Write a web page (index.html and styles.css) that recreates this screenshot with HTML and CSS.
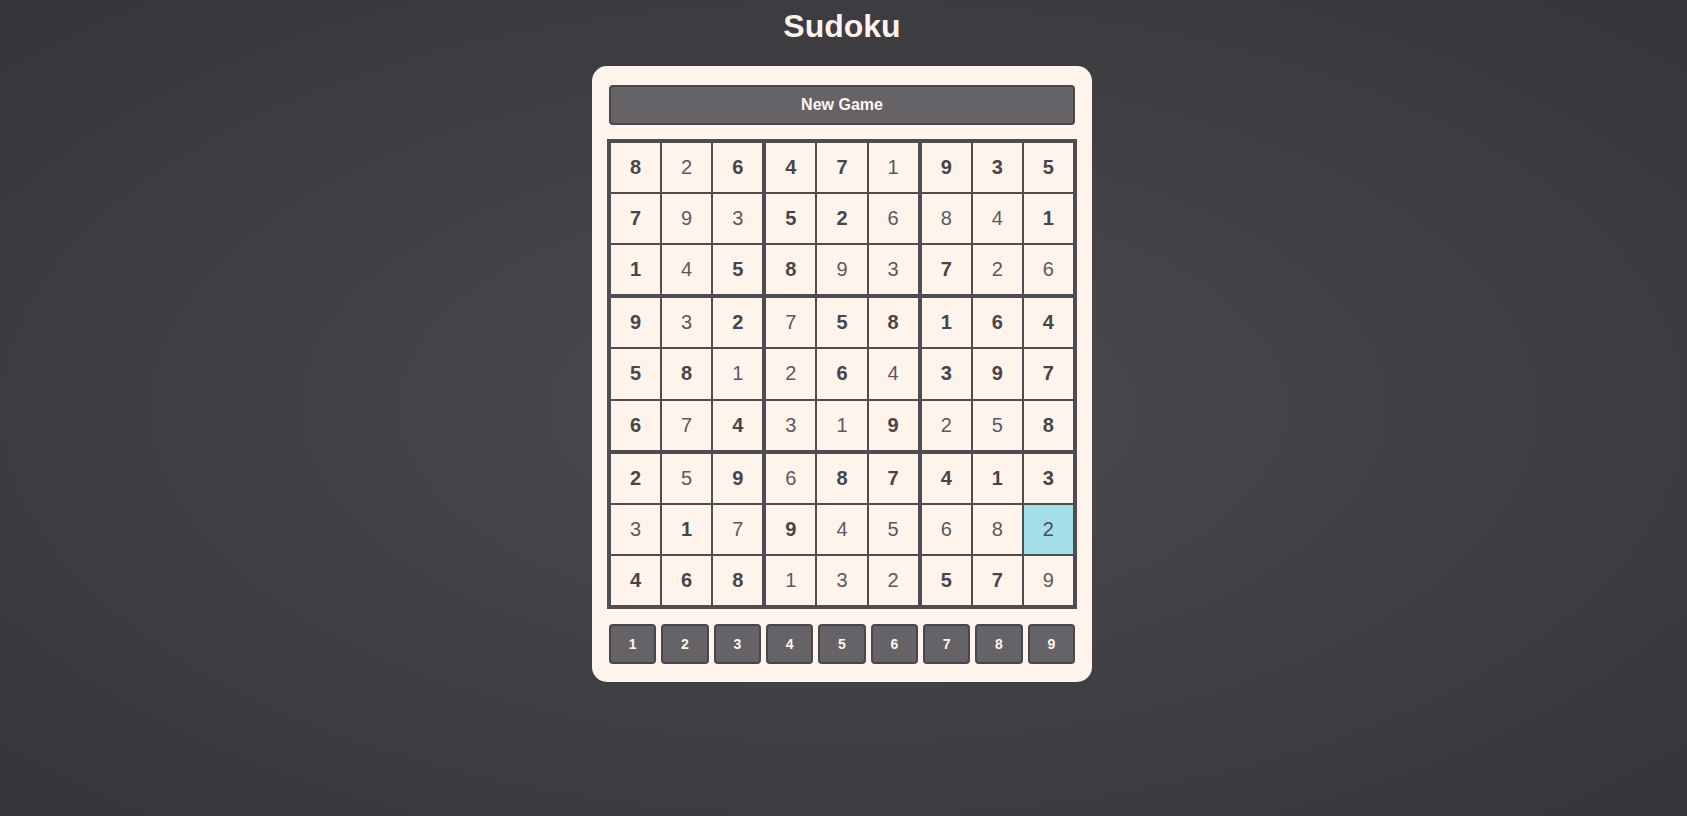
FILE: index.html
```html
<!DOCTYPE html>
<html lang="en">
<head>
<meta charset="utf-8">
<title>Sudoku</title>
<link rel="stylesheet" href="styles.css">
</head>
<body>
<div class="app">
  <h1 class="title">Sudoku</h1>
  <div class="card">
    <button class="new-game">New Game</button>
    <div class="board">
      <div class="box">
        <div class="cell given">8</div><div class="cell">2</div><div class="cell given">6</div>
        <div class="cell given">7</div><div class="cell">9</div><div class="cell">3</div>
        <div class="cell given">1</div><div class="cell">4</div><div class="cell given">5</div>
      </div>
      <div class="box">
        <div class="cell given">4</div><div class="cell given">7</div><div class="cell">1</div>
        <div class="cell given">5</div><div class="cell given">2</div><div class="cell">6</div>
        <div class="cell given">8</div><div class="cell">9</div><div class="cell">3</div>
      </div>
      <div class="box">
        <div class="cell given">9</div><div class="cell given">3</div><div class="cell given">5</div>
        <div class="cell">8</div><div class="cell">4</div><div class="cell given">1</div>
        <div class="cell given">7</div><div class="cell">2</div><div class="cell">6</div>
      </div>
      <div class="box">
        <div class="cell given">9</div><div class="cell">3</div><div class="cell given">2</div>
        <div class="cell given">5</div><div class="cell given">8</div><div class="cell">1</div>
        <div class="cell given">6</div><div class="cell">7</div><div class="cell given">4</div>
      </div>
      <div class="box">
        <div class="cell">7</div><div class="cell given">5</div><div class="cell given">8</div>
        <div class="cell">2</div><div class="cell given">6</div><div class="cell">4</div>
        <div class="cell">3</div><div class="cell">1</div><div class="cell given">9</div>
      </div>
      <div class="box">
        <div class="cell given">1</div><div class="cell given">6</div><div class="cell given">4</div>
        <div class="cell given">3</div><div class="cell given">9</div><div class="cell given">7</div>
        <div class="cell">2</div><div class="cell">5</div><div class="cell given">8</div>
      </div>
      <div class="box">
        <div class="cell given">2</div><div class="cell">5</div><div class="cell given">9</div>
        <div class="cell">3</div><div class="cell given">1</div><div class="cell">7</div>
        <div class="cell given">4</div><div class="cell given">6</div><div class="cell given">8</div>
      </div>
      <div class="box">
        <div class="cell">6</div><div class="cell given">8</div><div class="cell given">7</div>
        <div class="cell given">9</div><div class="cell">4</div><div class="cell">5</div>
        <div class="cell">1</div><div class="cell">3</div><div class="cell">2</div>
      </div>
      <div class="box">
        <div class="cell given">4</div><div class="cell given">1</div><div class="cell given">3</div>
        <div class="cell">6</div><div class="cell">8</div><div class="cell selected">2</div>
        <div class="cell given">5</div><div class="cell given">7</div><div class="cell">9</div>
      </div>
    </div>
    <div class="numpad">
      <button class="num">1</button>
      <button class="num">2</button>
      <button class="num">3</button>
      <button class="num">4</button>
      <button class="num">5</button>
      <button class="num">6</button>
      <button class="num">7</button>
      <button class="num">8</button>
      <button class="num">9</button>
    </div>
  </div>
</div>
</body>
</html>
```

FILE: styles.css
```css
html {
  height: 100%;
  background: radial-gradient(ellipse at center, #4a4a4f 0%, #35353a 100%);
}

body {
  margin: 0;
  padding: 0;
  font-family: "Liberation Sans", Arial, sans-serif;
}

.app {
  display: flex;
  flex-direction: column;
  align-items: center;
  padding: 8px 3px 0 0;
}

.title {
  margin: 0 0 21px;
  font-size: 32px;
  line-height: 37px;
  font-weight: bold;
  color: #fdf3eb;
}

.card {
  width: 500px;
  box-sizing: border-box;
  background: #fef4ec;
  border-radius: 15px;
  padding: 19px 15px 18px;
}

.new-game {
  display: block;
  width: calc(100% - 4px);
  height: 40px;
  margin: 0 2px 14px;
  background: #656367;
  border: 2px solid #49474b;
  border-radius: 4px;
  color: #fff6ef;
  font-family: inherit;
  font-size: 16px;
  font-weight: bold;
}

.board {
  display: grid;
  grid-template-columns: repeat(3, 1fr);
  grid-template-rows: repeat(3, 1fr);
  gap: 4px;
  padding: 4px;
  height: 470px;
  box-sizing: border-box;
  background: #4e4d51;
  margin-bottom: 15px;
}

.box {
  display: grid;
  grid-template-columns: repeat(3, 1fr);
  grid-template-rows: repeat(3, 1fr);
  gap: 2px;
}

.cell {
  display: flex;
  align-items: center;
  justify-content: center;
  background: #fef4ec;
  font-size: 20px;
  color: #5a595e;
}

.cell.given {
  font-weight: bold;
  color: #47454a;
}

.cell.selected {
  background: #a2dfe9;
  color: #4a4d52;
}

.numpad {
  display: flex;
  gap: 5px;
  padding: 0 2px;
}

.num {
  flex: 1;
  height: 40px;
  padding: 0;
  background: #656367;
  border: 2px solid #49474b;
  border-radius: 4px;
  color: #fff6ef;
  font-family: inherit;
  font-size: 14px;
  font-weight: bold;
}
```
